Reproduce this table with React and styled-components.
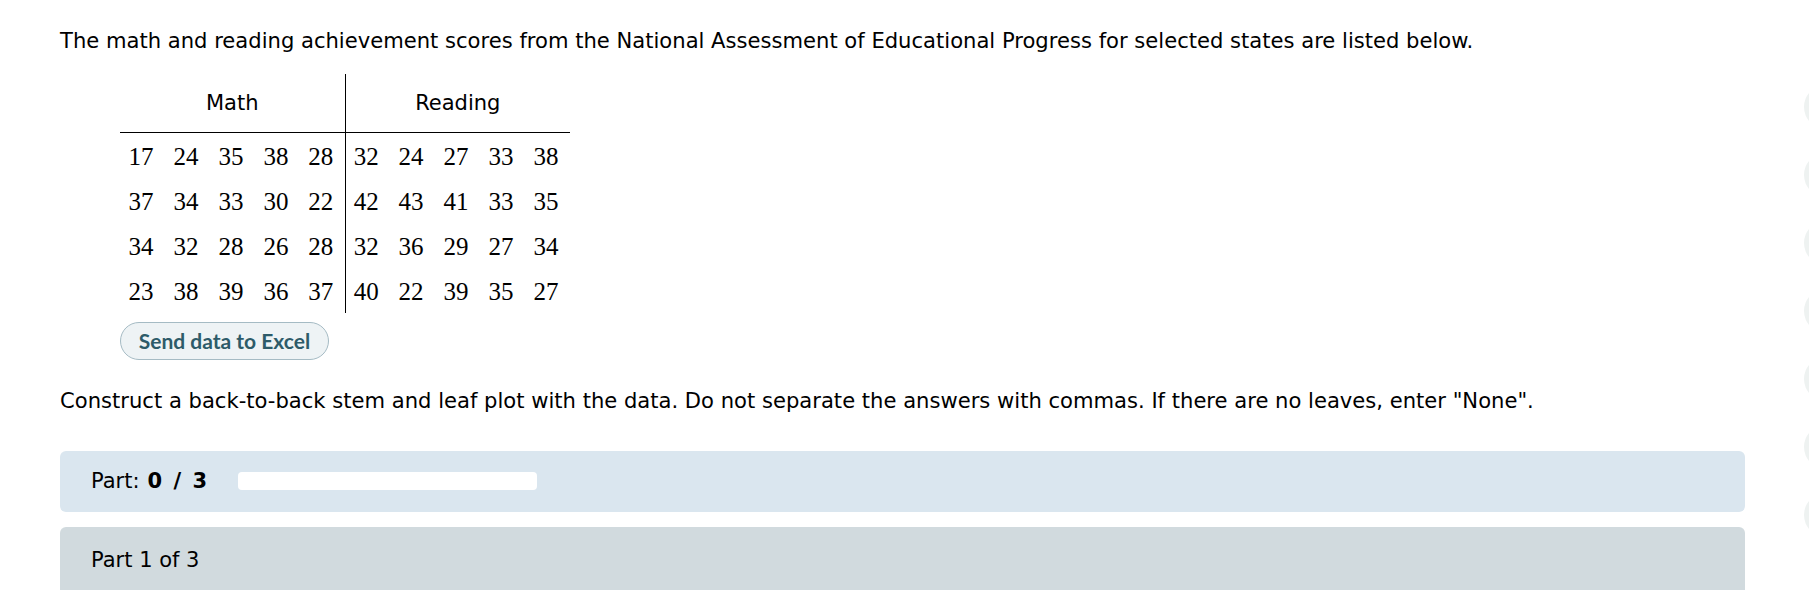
import styled, { createGlobalStyle } from "styled-components";

const GlobalStyle = createGlobalStyle`
    html, body {
        margin: 0;
        padding: 0;
        background: #ffffff;
        overflow: hidden;
    }
    body {
        font-family: "DejaVu Sans", Verdana, sans-serif;
        color: #000;
    }
`;

const mathScores = [
    [17, 24, 35, 38, 28],
    [37, 34, 33, 30, 22],
    [34, 32, 28, 26, 28],
    [23, 38, 39, 36, 37],
];

const readingScores = [
    [32, 24, 27, 33, 38],
    [42, 43, 41, 33, 35],
    [32, 36, 29, 27, 34],
    [40, 22, 39, 35, 27],
];

const Page = styled.div`
    display: flex;
    width: 1809px;
    height: 590px;
    overflow: hidden;
`;

const Main = styled.div`
    width: 1745px;
    flex-shrink: 0;
    padding: 27px 0 0 60px;
    box-sizing: border-box;
`;

const Rail = styled.div`
    display: flex;
    flex-direction: column;
    gap: 24px;
    padding: 85px 0 0 59px;
`;

const RailDot = styled.div`
    width: 44px;
    height: 44px;
    flex-shrink: 0;
    border-radius: 50%;
    background: #eef2f1;
`;

const Text = styled.p`
    margin: 0;
    font-size: 21.1px;
    line-height: 28px;
    margin-top: ${({ $gap }) => $gap || 0}px;
`;

const DataTable = styled.table`
    margin: 19px 0 0 60px;
    border-collapse: collapse;
    font-family: "Liberation Serif", "Times New Roman", serif;
`;

const HeadCell = styled.th`
    height: 58px;
    padding: 0;
    font-family: "DejaVu Sans", Verdana, sans-serif;
    font-size: 21px;
    font-weight: normal;
    text-align: center;
    border-bottom: 1px solid #000;
    ${({ $divider }) => $divider && "border-right: 1px solid #000;"}
`;

const NumCell = styled.td`
    width: 45px;
    height: 45px;
    box-sizing: border-box;
    padding: 4px 3px 0 0;
    font-family: "Liberation Serif", "Times New Roman", serif;
    font-size: 25px;
    line-height: 28px;
    text-align: center;
    vertical-align: middle;
    white-space: nowrap;
    ${({ $divider }) => $divider && "border-right: 1px solid #000;"}
`;

const ExcelButton = styled.button`
    display: block;
    margin: 9px 0 0 60px;
    width: 209px;
    height: 38px;
    padding: 0;
    border: 1px solid #a5bbc4;
    border-radius: 19px;
    background: #eef3f5;
    color: #2d5b69;
    font-family: Lato, "Open Sans", sans-serif;
    font-size: 21px;
    font-weight: 700;
    cursor: pointer;
`;

const ProgressPanel = styled.div`
    display: flex;
    align-items: center;
    gap: 31px;
    margin-top: 36px;
    height: 61px;
    padding-left: 31px;
    border-radius: 6px;
    background: #dae6ef;
    font-size: 21px;
`;

const PartCount = styled.b`
    margin-left: 8px;
    word-spacing: 4px;
`;

const ProgressTrack = styled.div`
    width: 299px;
    height: 18px;
    border-radius: 4px;
    background: #ffffff;
`;

const PartHeader = styled.div`
    margin-top: 15px;
    height: 80px;
    padding: 19px 31px 0;
    box-sizing: border-box;
    border-radius: 6px 6px 0 0;
    background: #d1dade;
    font-size: 21px;
    line-height: 28px;
`;

export default function App() {
    return (
        <>
            <GlobalStyle />
            <Page>
                <Main>
                    <Text>
                        The math and reading achievement scores from the National Assessment of
                        Educational Progress for selected states are listed below.
                    </Text>
                    <DataTable>
                        <thead>
                            <tr>
                                <HeadCell colSpan={5} $divider>
                                    Math
                                </HeadCell>
                                <HeadCell colSpan={5}>Reading</HeadCell>
                            </tr>
                        </thead>
                        <tbody>
                            {mathScores.map((row, i) => (
                                <tr key={i}>
                                    {row.map((v, j) => (
                                        <NumCell key={"m" + j} $divider={j === 4}>
                                            {v}
                                        </NumCell>
                                    ))}
                                    {readingScores[i].map((v, j) => (
                                        <NumCell key={"r" + j}>{v}</NumCell>
                                    ))}
                                </tr>
                            ))}
                        </tbody>
                    </DataTable>
                    <ExcelButton>Send data to Excel</ExcelButton>
                    <Text $gap={27}>
                        Construct a back-to-back stem and leaf plot with the data. Do not separate the
                        answers with commas. If there are no leaves, enter "None".
                    </Text>
                    <ProgressPanel>
                        <span>
                            Part:<PartCount>0 / 3</PartCount>
                        </span>
                        <ProgressTrack />
                    </ProgressPanel>
                    <PartHeader>Part 1 of 3</PartHeader>
                </Main>
                <Rail>
                    {Array.from({ length: 7 }).map((_, i) => (
                        <RailDot key={i} />
                    ))}
                </Rail>
            </Page>
        </>
    );
}
